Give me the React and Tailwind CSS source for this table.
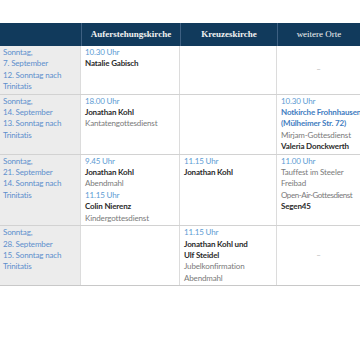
import React from "react";

const cols = "grid grid-cols-[81px_99px_97px_83px]";
const sans = { fontFamily: "Lato, 'Open Sans', sans-serif" };

function Day({ lines }) {
  return (
    <div className="bg-[#ececec] border-r border-[#dcdcdc] pl-[3px] pt-px pb-px text-[#5d8fcc]">
      {lines.map((l, i) => (
        <div key={i}>{l}</div>
      ))}
    </div>
  );
}

const T = ({ children }) => <div className="text-[#5c9bd3]">{children}</div>;
const N = ({ children }) => <div className="text-[#2b2b2b] font-bold">{children}</div>;
const D = ({ children, tight }) => (
  <div className={"text-[#7a7a7a] whitespace-nowrap " + (tight ? "tracking-[-0.45px]" : "")}>{children}</div>
);
const B = ({ children }) => <div className="text-[#3f7dbf] font-bold whitespace-nowrap">{children}</div>;

function Cell({ children, last }) {
  return (
    <div className={"pl-[4px] pt-px pb-px overflow-hidden " + (last ? "" : "border-r border-[#dcdcdc]")}>
      {children}
    </div>
  );
}

function Dash() {
  return (
    <div className="flex items-center justify-center text-[#b0b0b0]">–</div>
  );
}

export default function App() {
  return (
    <div className="w-[360px] h-[360px] bg-white overflow-hidden" style={sans}>
      <div className="h-[23px]" />
      <div
        className={cols + " h-[23px] bg-[#113a5c] text-[#f2f2f2] text-[9px]"}
        style={{ fontFamily: "'Liberation Serif', 'DejaVu Serif', serif" }}
      >
        <div />
        <div className="border-l border-[#3e6082] flex items-center justify-center font-bold">
          Auferstehungskirche
        </div>
        <div className="border-l border-[#3e6082] flex items-center justify-center font-bold">
          Kreuzeskirche
        </div>
        <div className="border-l border-[#3e6082] flex items-center justify-center">
          weitere Orte
        </div>
      </div>
      <div className="text-[8px] leading-[11.4px] tracking-[-0.15px]">
        <div className={cols + " border-b border-[#d2d2d2]"}>
          <Day lines={["Sonntag,", "7. September", "12. Sonntag nach", "Trinitatis"]} />
          <Cell>
            <T>10.30 Uhr</T>
            <N>Natalie Gabisch</N>
          </Cell>
          <Cell />
          <Dash />
        </div>
        <div className={cols + " border-b border-[#d2d2d2]"}>
          <Day lines={["Sonntag,", "14. September", "13. Sonntag nach", "Trinitatis"]} />
          <Cell>
            <T>18.00 Uhr</T>
            <N>Jonathan Kohl</N>
            <D>Kantatengottesdienst</D>
          </Cell>
          <Cell />
          <Cell last>
            <T>10.30 Uhr</T>
            <B>Notkirche Frohnhausen</B>
            <B>(Mülheimer Str. 72)</B>
            <D>Mirjam-Gottesdienst</D>
            <N>Valeria Donckwerth</N>
          </Cell>
        </div>
        <div className={cols + " border-b border-[#d2d2d2]"}>
          <Day lines={["Sonntag,", "21. September", "14. Sonntag nach", "Trinitatis"]} />
          <Cell>
            <T>9.45 Uhr</T>
            <N>Jonathan Kohl</N>
            <D>Abendmahl</D>
            <T>11.15 Uhr</T>
            <N>Colin Nierenz</N>
            <D>Kindergottesdienst</D>
          </Cell>
          <Cell>
            <T>11.15 Uhr</T>
            <N>Jonathan Kohl</N>
          </Cell>
          <Cell last>
            <T>11.00 Uhr</T>
            <D>Tauffest im Steeler</D>
            <D>Freibad</D>
            <D tight>Open-Air-Gottesdienst</D>
            <N>Segen45</N>
          </Cell>
        </div>
        <div className={cols + " border-b border-[#c8c8c8]"}>
          <Day lines={["Sonntag,", "28. September", "15. Sonntag nach", "Trinitatis"]} />
          <Cell />
          <Cell>
            <T>11.15 Uhr</T>
            <N>Jonathan Kohl und</N>
            <N>Ulf Steidel</N>
            <D>Jubelkonfirmation</D>
            <D>Abendmahl</D>
          </Cell>
          <Dash />
        </div>
      </div>
    </div>
  );
}
